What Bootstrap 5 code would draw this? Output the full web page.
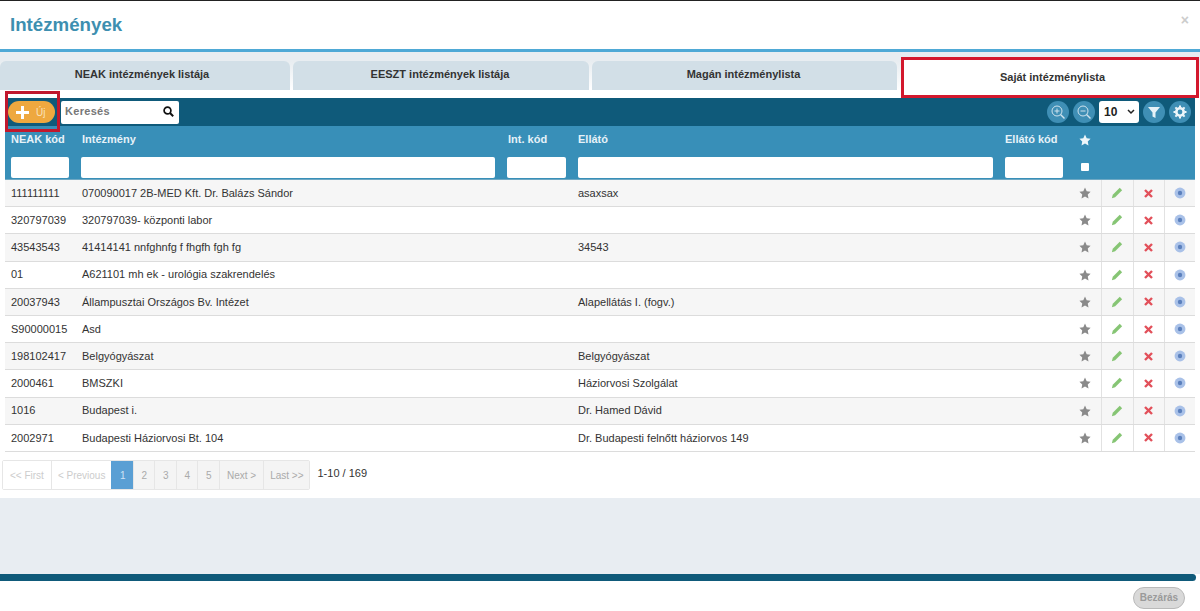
<!DOCTYPE html>
<html lang="hu">
<head>
<meta charset="UTF-8">
<title>Intézmények</title>
<link href="https://cdn.jsdelivr.net/npm/bootstrap@5.3.0/dist/css/bootstrap.min.css" rel="stylesheet">
<style>
html, body { height: 611px; overflow: hidden; }
body { font-family: "Liberation Sans", Arial, sans-serif; font-size: 11px; color: #333; background: #fff; border-top: 1px solid #222; }
.dlg-head { height: 48px; padding: 0 10px; border-bottom: 3px solid #4fa9d6; box-sizing: content-box; }
.dlg-head h1 { font-size: 18.7px; font-weight: 700; color: #3d8fb0; margin: 0; line-height: 48px; }
.dlg-x { position: absolute; right: 11px; top: 9px; font-size: 14px; color: #ccc; font-weight: 700; }
.tab-strip { background: linear-gradient(#e8edf1 0, #e8edf1 9px, #fff 38px, #fff 100%); height: 47px; padding-top: 9px; gap: 3px; }
.tab-item { height: 29px; background: #d2dfe7; border-radius: 6px 6px 0 0; text-align: center; font-weight: 700; line-height: 27px; color: #333; font-size: 11px; padding-right: 2px; }
.tab-first { padding-right: 6px; }
.tab-own { width: 298px; height: 41px; margin-top: -4px; margin-left: 1px; background: #fff; border: 3px solid #d3182d; line-height: 34px; flex: none; z-index: 2; border-radius: 0; padding: 0 0 0 5px; }
.list-wrap { padding: 0 5px; }
.tool-bar { height: 28px; background: #0f5a7a; padding: 0 4px 0 3px; margin-top: -1px; }
.add-mark { position: absolute; left: 5px; top: 91px; width: 55px; height: 41px; border: 3px solid #c1182d; z-index: 3; }
.add-btn { width: 47px; height: 22px; background: #eea83f; border: 0; border-radius: 11px; color: #f8e2bd; font-size: 10px; padding: 0 0 0 8px; gap: 7px; }
.search-box { width: 118px; height: 23px; background: #fff; border-radius: 2px; margin-left: 6px; padding: 0 5px 2px 4px; color: #777; font-weight: 700; font-size: 11px; letter-spacing: .3px; }
.round-btn { width: 22px; height: 22px; border-radius: 50%; background: #3f8fb5; }
.page-size { width: 40px; height: 22px; background: #fff; border-radius: 3px; font-size: 12px; font-weight: 700; color: #222; padding: 0 4px 0 5px; }
.inst-table { width: 100%; table-layout: fixed; border-collapse: collapse; margin: 0; }
.inst-table thead th { background: #388fb8; color: #e6f2f8; font-size: 11px; font-weight: 700; padding: 0 6px 4px; border: 0; height: 31px; vertical-align: middle; }
.inst-table thead tr.filter-row th { height: 22px; padding: 0 6px 1px; vertical-align: top; border-bottom: 1px solid #6fa9c4; }
.inst-table th:nth-child(2), .inst-table td:nth-child(2), .inst-table thead tr:first-child th:nth-child(3) { padding-left: 7px; }
.inst-table thead tr.filter-row th:nth-child(2) { padding-left: 6px; }
.filter-box { display: block; height: 21px; width: 100%; background: #fff; border-radius: 2px; }
.filter-check { display: block; width: 8px; height: 8px; background: #fff; margin: 6px 0 0 12px; border-radius: 1px; }
.inst-table tbody td { height: 27.2px; padding: 0 6px; border-bottom: 1px solid #dcdcdc; font-size: 11px; color: #333; vertical-align: middle; white-space: nowrap; background: #fff; }
.inst-table tbody tr:nth-child(odd) td { background: #f6f6f6; }
.inst-table tbody td.act-cell { border-left: 1px solid #e2e2e2; padding: 0; }
.inst-table tbody td.star-cell { padding: 0; }
.inst-table svg { display: block; margin: 0 auto; }
.inst-table thead svg { margin-bottom: 4px; }
.pager-row { height: 46px; margin-left: -3px; padding-top: 8px; }
.pager-list { display: flex; height: 30px; border: 1px solid #e6e6e6; border-radius: 2px; margin: 0; padding: 0; list-style: none; }
.pager-list li { border-left: 1px solid #e6e6e6; padding: 0 7px; line-height: 29px; font-size: 10px; color: #aaa; background: #f4f4f4; min-width: 21.5px; text-align: center; }
.pager-list li:first-child { border-left: 0; }
.pager-list li.pg-off { background: #fff; color: #ccc; }
.pager-list li.pg-prev { padding: 0 6px; }
.pager-list li.pg-on { background: #5a9fd4; color: #cfe4f4; border-color: #5a9fd4; }
.pager-list li.pg-next { padding: 0 7px; }
.pager-list li.pg-last { padding: 0 6px; }
.pager-count { margin-left: 7px; font-size: 11px; color: #333; margin-top: 5px; }
.empty-band { height: 76px; background: #e8edf2; }
.end-bar { height: 7px; background: #0f5a7a; border-radius: 0 4px 4px 0; margin-right: 4px; }
.dlg-foot { height: 29px; padding-right: 15px; padding-top: 6px; }
.close-btn { width: 52px; height: 22px; border-radius: 11px; background: #d9d9d9; border: 1px solid #b9b9b9; color: #9a9a9a; font-size: 10px; font-weight: 700; padding: 0; }
</style>
</head>
<body>
<div class="position-relative">
    <div class="dlg-head"><h1>Intézmények</h1></div>
    <span class="dlg-x">×</span>
</div>
<div class="tab-strip d-flex">
    <div class="tab-item tab-first" style="width:290px">NEAK intézmények listája</div>
    <div class="tab-item" style="width:296px">EESZT intézmények listája</div>
    <div class="tab-item" style="width:305px">Magán intézménylista</div>
    <div class="tab-item tab-own">Saját intézménylista</div>
</div>
<div class="add-mark"></div>
<div class="list-wrap">
    <div class="tool-bar d-flex align-items-center">
        <button class="add-btn d-flex align-items-center" type="button">
            <svg width="13" height="13" viewBox="0 0 13 13"><path d="M5 0h3v5h5v3H8v5H5V8H0V5h5z" fill="#fff"/></svg>Új
        </button>
        <div class="search-box d-flex align-items-center justify-content-between">Keresés
            <svg width="11" height="11" viewBox="0 0 11 11"><circle cx="4.5" cy="4.5" r="3.4" fill="none" stroke="#111" stroke-width="1.7"/><path d="M7 7l3.2 3.2" stroke="#111" stroke-width="2"/></svg>
        </div>
        <div class="ms-auto d-flex align-items-center gap-1">
            <div class="round-btn d-flex align-items-center justify-content-center"><svg width="16" height="16" viewBox="0 0 16 16"><circle cx="7" cy="7" r="5" fill="none" stroke="#cfe3ee" stroke-width="1"/><path d="M10.5 10.5l4 4" stroke="#cfe3ee" stroke-width="1.5"/><path d="M7 4.5v5M4.5 7h5" stroke="#cfe3ee"/></svg></div>
            <div class="round-btn d-flex align-items-center justify-content-center"><svg width="16" height="16" viewBox="0 0 16 16"><circle cx="7" cy="7" r="5" fill="none" stroke="#cfe3ee" stroke-width="1"/><path d="M10.5 10.5l4 4" stroke="#cfe3ee" stroke-width="1.5"/><path d="M4.5 7h5" stroke="#cfe3ee"/></svg></div>
            <div class="page-size d-flex align-items-center justify-content-between">10<svg width="8" height="6" viewBox="0 0 8 6"><path d="M1 1l3 3 3-3" fill="none" stroke="#222" stroke-width="1.5"/></svg></div>
            <div class="round-btn d-flex align-items-center justify-content-center"><svg width="12" height="12" viewBox="0 0 12 12"><path d="M0 1h12L7.5 6.5V12l-3-1.5v-4z" fill="#e6f2f8"/></svg></div>
            <div class="round-btn d-flex align-items-center justify-content-center"><svg width="14" height="14" viewBox="0 0 14 14"><circle cx="7" cy="7" r="3.7" fill="none" stroke="#eef6fa" stroke-width="2.6"/><path d="M7 0.5v2M7 11.5v2M0.5 7h2M11.5 7h2M2.4 2.4l1.4 1.4M10.2 10.2l1.4 1.4M2.4 11.6l1.4-1.4M10.2 3.8l1.4-1.4" stroke="#eef6fa" stroke-width="2"/></svg></div>
        </div>
    </div>
    <table class="inst-table">
        <colgroup><col style="width:70px"><col style="width:426px"><col style="width:71px"><col style="width:427px"><col style="width:70px"><col style="width:32px"><col style="width:32px"><col style="width:31px"><col style="width:31px"></colgroup>
        <thead>
            <tr><th>NEAK kód</th><th>Intézmény</th><th>Int. kód</th><th>Ellátó</th><th>Ellátó kód</th>
                <th class="p-0"><svg width="12" height="12" viewBox="0 0 24 24"><path d="M12 1l3.4 7.3 7.8 1-5.7 5.5 1.5 8L12 18.9 5 22.8l1.5-8L.8 9.3l7.8-1z" fill="#eef6fa"/></svg></th><th></th><th></th><th></th></tr>
            <tr class="filter-row"><th><span class="filter-box"></span></th><th><span class="filter-box"></span></th><th><span class="filter-box"></span></th><th><span class="filter-box"></span></th><th><span class="filter-box"></span></th><th class="p-0"><span class="filter-check"></span></th><th></th><th></th><th></th></tr>
        </thead>
        <tbody id="rows"></tbody>
    </table>
    <div class="pager-row d-flex align-items-start">
        <ul class="pager-list">
            <li class="pg-off">&lt;&lt; First</li><li class="pg-off pg-prev">&lt; Previous</li><li class="pg-on">1</li><li>2</li><li>3</li><li>4</li><li>5</li><li class="pg-next">Next &gt;</li><li class="pg-last">Last &gt;&gt;</li>
        </ul>
        <span class="pager-count">1-10 / 169</span>
    </div>
</div>
<div class="empty-band"></div>
<div class="end-bar"></div>
<div class="dlg-foot d-flex justify-content-end"><button class="close-btn" type="button">Bezárás</button></div>
<script>
    var data = [
        ['111111111', '070090017 2B-MED Kft. Dr. Balázs Sándor', 'asaxsax'],
        ['320797039', '320797039- központi labor', ''],
        ['43543543', '41414141 nnfghnfg f fhgfh fgh fg', '34543'],
        ['01', 'A621101 mh ek - urológia szakrendelés', ''],
        ['20037943', 'Állampusztai Országos Bv. Intézet', 'Alapellátás I. (fogv.)'],
        ['S90000015', 'Asd', ''],
        ['198102417', 'Belgyógyászat', 'Belgyógyászat'],
        ['2000461', 'BMSZKI', 'Háziorvosi Szolgálat'],
        ['1016', 'Budapest i.', 'Dr. Hamed Dávid'],
        ['2002971', 'Budapesti Háziorvosi Bt. 104', 'Dr. Budapesti felnőtt háziorvos 149']
    ];
    var star = '<svg width="12" height="12" viewBox="0 0 24 24"><path d="M12 1l3.4 7.3 7.8 1-5.7 5.5 1.5 8L12 18.9 5 22.8l1.5-8L.8 9.3l7.8-1z" fill="#8a8a8a"/></svg>';
    var pen = '<svg width="12" height="12" viewBox="0 0 11 11"><path d="M8 .8l2.2 2.2-6.4 6.4L.8 10.2l.8-3z" fill="#86c574"/></svg>';
    var del = '<svg width="9" height="9" viewBox="0 0 9 9"><path d="M1 1l7 7M8 1L1 8" stroke="#e2505a" stroke-width="2.4"/></svg>';
    var view = '<svg width="12" height="12" viewBox="0 0 11 11"><circle cx="5.5" cy="5.5" r="5" fill="#a9c1e8"/><circle cx="5.5" cy="5.5" r="2" fill="#5c80bd"/></svg>';
    document.getElementById('rows').innerHTML = data.map(function (r) {
        return '<tr><td>' + r[0] + '</td><td>' + r[1] + '</td><td></td><td>' + r[2] + '</td><td></td>' +
            '<td class="star-cell">' + star + '</td><td class="act-cell">' + pen + '</td><td class="act-cell">' + del + '</td><td class="act-cell">' + view + '</td></tr>';
    }).join('');
</script>
<script src="https://cdn.jsdelivr.net/npm/bootstrap@5.3.0/dist/js/bootstrap.bundle.min.js"></script>
</body>
</html>
